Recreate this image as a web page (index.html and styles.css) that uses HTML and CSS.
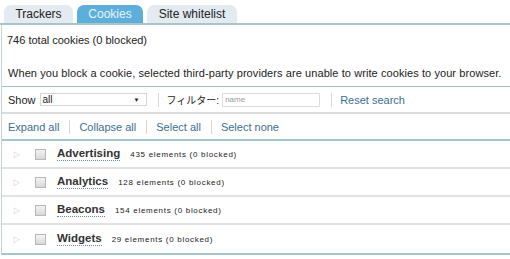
FILE: index.html
```html
<!DOCTYPE html>
<html>
<head>
<meta charset="utf-8">
<link rel="stylesheet" href="styles.css">
</head>
<body>
<div class="tabs">
  <div class="tab">Trackers</div>
  <div class="tab active">Cookies</div>
  <div class="tab wide">Site whitelist</div>
</div>
<div class="panel">
  <div class="summary">746 total cookies (0 blocked)</div>
  <div class="note">When you block a cookie, selected third-party providers are unable to write cookies to your browser.</div>
  <div class="bar filters">
    <span>Show</span>
    <div class="select"><span>all</span><span class="caret">▼</span></div>
    <span class="sep"></span>
    <span class="jp">フィルター:</span>
    <div class="input">name</div>
    <span class="sep"></span>
    <a class="link">Reset search</a>
  </div>
  <div class="bar actions">
    <a class="link">Expand all</a><span class="sep"></span>
    <a class="link">Collapse all</a><span class="sep"></span>
    <a class="link">Select all</a><span class="sep"></span>
    <a class="link">Select none</a>
  </div>
  <div class="list">
    <div class="row"><span class="tri">▷</span><span class="cb"></span><span class="name">Advertising</span><span class="count">435 elements (0 blocked)</span></div>
    <div class="row"><span class="tri">▷</span><span class="cb"></span><span class="name">Analytics</span><span class="count">128 elements (0 blocked)</span></div>
    <div class="row"><span class="tri">▷</span><span class="cb"></span><span class="name">Beacons</span><span class="count">154 elements (0 blocked)</span></div>
    <div class="row"><span class="tri">▷</span><span class="cb"></span><span class="name">Widgets</span><span class="count">29 elements (0 blocked)</span></div>
  </div>
</div>
</body>
</html>
```
FILE: styles.css
```css
body {
  margin: 0;
  background: #fff;
  font-family: "Liberation Sans", Arial, "Noto Sans CJK JP", sans-serif;
  font-size: 11px;
  color: #222;
  width: 510px;
}
.tabs {
  display: flex;
  gap: 4px;
  padding: 5px 0 0 4px;
  border-bottom: 2px solid #a9c4ca;
  height: 18px;
}
.tab {
  width: 69px;
  height: 18px;
  line-height: 19px;
  text-align: center;
  background: #e4ebf0;
  border-radius: 7px 7px 0 0;
  font-size: 12px;
  color: #222;
}
.tab.active {
  width: 66px;
  background: #5caedb;
  color: #e8f4fb;
}
.tab.wide { width: 90px; }
.panel {
  border-left: 1px solid #c3d2d6;
  border-bottom: 2px solid #a9c4ca;
  margin-left: 1px;
}
.summary {
  padding: 9px 0 0 5px;
  height: 29px;
  line-height: 13px;
}
.note {
  padding: 3px 0 6px 6px;
  height: 14px;
  line-height: 14px;
  letter-spacing: 0.08px;
  border-bottom: 1px solid #a5bfc7;
}
.bar {
  display: flex;
  align-items: center;
  padding-left: 6px;
  height: 25px;
}
.filters { border-bottom: 2px solid #dcdcdc; }
.actions { border-bottom: 2px solid #a9c4ca; }
.select {
  display: flex;
  justify-content: space-between;
  align-items: center;
  height: 13px;
  margin-left: 4px;
  border: 1px solid #d6d6d6;
  padding: 0 6px 0 2px;
  font-size: 10px;
  box-sizing: border-box;
  width: 107px;
}
.caret { font-size: 6px; color: #222; }
.sep {
  width: 1px;
  height: 14px;
  background: #d8d8d8;
  margin: 0 8px 0 11px;
}
.jp { font-size: 10px; }
.input {
  width: 98px;
  height: 14px;
  margin-left: 3px;
  border: 1px solid #dcdcdc;
  font-size: 8px;
  color: #999;
  padding-left: 2px;
  box-sizing: border-box;
  line-height: 12px;
}
.link { color: #3c6e93; font-size: 11px; }
.actions .sep { margin: 0 9px 0 10px; }
.row {
  display: flex;
  align-items: center;
  height: 26px;
  border-bottom: 2px solid #e2e2e2;
}
.row:last-child { border-bottom: none; height: 28px; }
.tri { font-size: 7px; color: #b0b0b0; margin-left: 11px; width: 22px; }
.cb {
  width: 9px;
  height: 9px;
  border: 1px solid #b8b8b8;
  background: linear-gradient(#f4f4f4, #d8d8d8);
  margin-right: 11px;
}
.name {
  font-size: 11.5px;
  font-weight: bold;
  color: #333;
  border-bottom: 1px dotted #6d8fa8;
  line-height: 13px;
}
.count { font-size: 8px; margin-left: 10px; color: #222; letter-spacing: 0.7px; }
```
